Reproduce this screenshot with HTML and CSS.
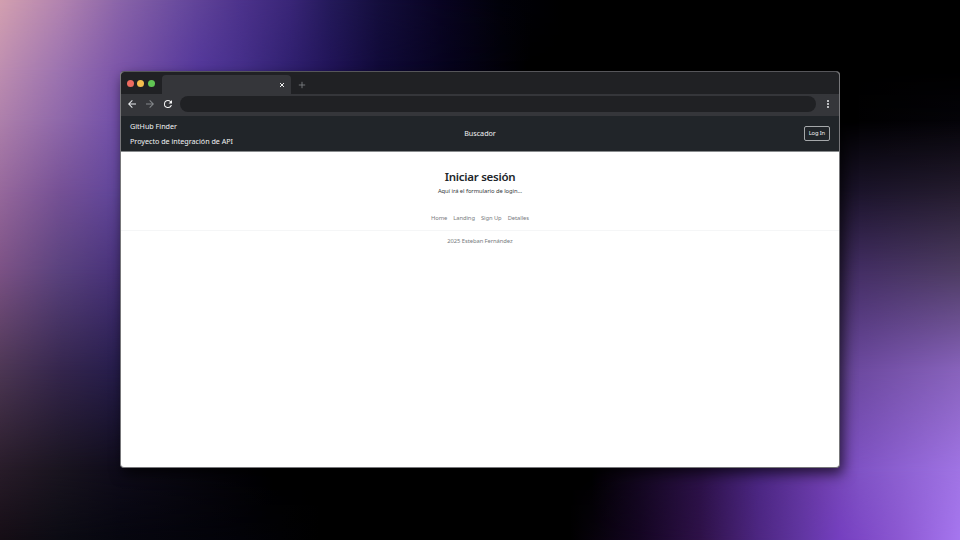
FILE: index.html
```html
<!DOCTYPE html>
<html lang="es">
<head>
<meta charset="utf-8">
<title>GitHub Finder</title>
<link rel="stylesheet" href="styles.css">
</head>
<body>
<div class="backdrop">
  <div class="band band-1"></div>
  <div class="band band-2"></div>
  <div class="band band-3"></div>
  <div class="band band-4"></div>
  <div class="band band-5"></div>
  <div class="band band-6"></div>
  <div class="band band-7"></div>
  <div class="band band-8"></div>
</div>
<div class="window">
  <div class="tabs">
    <div class="lights"><i class="red"></i><i class="yellow"></i><i class="green"></i></div>
    <div class="tab"><svg width="6" height="6" viewBox="0 0 6 6"><path d="M1 1l4 4M5 1l-4 4" stroke="#f0f0f0" stroke-width="1"/></svg></div>
    <svg class="plus" width="8" height="8" viewBox="0 0 8 8"><path d="M4 .8v6.4M.8 4h6.4" stroke="#7b7e81" stroke-width=".9"/></svg>
  </div>
  <div class="toolbar">
    <svg class="nav" viewBox="0 0 24 24" fill="#e8eaed"><path d="M20 11H7.83l5.59-5.59L12 4l-8 8 8 8 1.41-1.41L7.83 13H20v-2z"/></svg>
    <svg class="nav" viewBox="0 0 24 24" fill="#85888b"><path d="M12 4l-1.41 1.41L16.17 11H4v2h12.17l-5.58 5.59L12 20l8-8z"/></svg>
    <svg class="nav" viewBox="0 0 24 24" fill="#f4f4f4"><path d="M17.65 6.35A7.96 7.96 0 0 0 12 4a8 8 0 1 0 7.73 10h-2.08A6 6 0 1 1 12 6c1.66 0 3.14.69 4.22 1.78L13 11h7V4l-2.35 2.35z"/></svg>
    <div class="address"></div>
    <svg class="more" viewBox="0 0 24 24" fill="#e8eaed"><circle cx="12" cy="6" r="2"/><circle cx="12" cy="12" r="2"/><circle cx="12" cy="18" r="2"/></svg>
  </div>
  <header class="navbar">
    <div class="brand"><span>GitHub Finder</span><span>Proyecto de integración de API</span></div>
    <a class="search">Buscador</a>
    <a class="login">Log In</a>
  </header>
  <main>
    <h1>Iniciar sesión</h1>
    <p>Aquí irá el formulario de login...</p>
  </main>
  <footer>
    <nav><a>Home</a><a>Landing</a><a>Sign Up</a><a>Detalles</a></nav>
    <p>2025 Esteban Fernández</p>
  </footer>
</div>
</body>
</html>
```
FILE: styles.css
```css
* { box-sizing: border-box; }
body {
  margin: 0;
  width: 960px;
  height: 540px;
  overflow: hidden;
  position: relative;
  display: flex;
  justify-content: center;
  padding-top: 71px;
  background: #000;
  font-family: "Noto Sans", "Open Sans", sans-serif;
}
svg { display: block; flex: none; }
p, h1 { margin: 0; }

/* Each band fades in over the one above it, blending the rows into a mesh. */
.backdrop { position: absolute; inset: 0; }
.band {
  position: absolute;
  inset: 0;
  -webkit-mask: linear-gradient(transparent var(--from), #000 var(--to));
  mask: linear-gradient(transparent var(--from), #000 var(--to));
}
.band-1 { --from: -2px; --to: -1px; background: linear-gradient(90deg, #d3a0b0 0, #b384b0 60px, #8a64a9 120px, #694b9e 180px, #4d338c 240px, #3a2678 290px, #241a5a 330px, #140e3c 380px, #090422 440px, #02020a 500px, #000 570px); }
.band-2 { --from: 0px; --to: 70px; background: linear-gradient(90deg, #be8eb0 0, #9c73b0 60px, #7e57a9 115px, #53379a 200px, #452f8a 240px, #302070 290px, #211458 330px, #100a38 380px, #06031c 450px, #000 530px); }
.band-3 { --from: 70px; --to: 120px; background: linear-gradient(90deg, #ae80ab 0, #8f68aa 60px, #7250a8 115px, #3a2678 200px, #000 400px, #000 840px, #040308 960px); }
.band-4 { --from: 120px; --to: 190px; background: linear-gradient(90deg, #97699c 0, #765196 60px, #61469a 115px, #000 400px, #000 780px, #1a1329 860px, #231b2d 960px); }
.band-5 { --from: 190px; --to: 270px; background: linear-gradient(90deg, #7c5285 0, #5a427e 60px, #48327a 115px, #000 400px, #000 760px, #432e63 860px, #4d3c62 960px); }
.band-6 { --from: 270px; --to: 370px; background: linear-gradient(90deg, #4d3754 0, #35264d 60px, #261d4b 115px, #000 400px, #000 700px, #6d4aa0 860px, #8863bc 960px); }
.band-7 { --from: 370px; --to: 470px; background: linear-gradient(90deg, #281c29 0, #19141f 60px, #0e0b19 120px, #000 280px, #000 590px, #2b1147 700px, #4c2784 760px, #6d3dab 820px, #8053c5 860px, #a074e4 960px); }
.band-8 { --from: 470px; --to: 540px; background: linear-gradient(90deg, #150d15 0, #0b0b13 60px, #06060f 120px, #020208 240px, #000 320px, #000 570px, #140522 640px, #2e1148 700px, #4e2783 760px, #6035a0 800px, #753fc0 840px, #8c58d2 900px, #a676ef 960px); }

.window {
  position: relative;
  width: 720px;
  height: 397px;
  border: 1px solid #77777a;
  border-top-color: #56565a;
  border-radius: 4px;
  overflow: hidden;
  background: #fff;
  box-shadow: 3px 6px 13px rgba(0, 0, 0, .65);
}
.tabs { display: flex; height: 22px; background: #202124; padding-left: 5.5px; }
.lights { display: flex; gap: 3.8px; padding-top: 7.7px; width: 35.5px; }
.lights i { width: 7px; height: 7px; border-radius: 50%; }
.red { background: #ed6b60; }
.yellow { background: #f4be4f; }
.green { background: #61c554; }
.tab {
  width: 129px;
  height: 19px;
  margin-top: 3px;
  padding: 7px 6px 0 0;
  display: flex;
  justify-content: flex-end;
  border-radius: 4px 4px 0 0;
  background: #35363a;
}
.plus { margin: 8.6px 0 0 7px; }
.toolbar { display: flex; align-items: center; height: 22px; padding: 0 5px 2px 5px; background: #35363a; }
.nav { width: 12px; height: 12px; margin-right: 6px; }
.address { flex: 1; height: 16px; border-radius: 8px; background: #202124; }
.more { width: 12px; height: 12px; margin-left: 6px; }
.navbar {
  display: grid;
  grid-template-columns: 1fr auto 1fr;
  align-items: center;
  height: 36px;
  padding: 0 9px;
  border-bottom: 1px solid #888b8d;
  background: #212529;
  color: #f1f3f4;
  font-size: 7.2px;
  letter-spacing: -.02px;
}
.brand { display: flex; flex-direction: column; line-height: 15px; }
.search { position: relative; top: -.6px; }
.login { justify-self: end; padding: 0 4px; border: 1px solid #a5a8aa; border-radius: 2px; font-size: 5.8px; letter-spacing: -.15px; line-height: 13px; }
main { padding-top: 17px; text-align: center; color: #212529; }
h1 { font-size: 11.5px; line-height: 16px; font-weight: 600; letter-spacing: -.26px; }
main p { margin-top: 1px; font-size: 5.8px; letter-spacing: -.05px; line-height: 11px; color: #34383b; }
footer { margin-top: 16px; text-align: center; color: #777b7e; font-size: 5.8px; letter-spacing: -.06px; line-height: 11px; }
footer nav { display: flex; justify-content: center; gap: 6px; height: 18px; border-bottom: 1px solid #f5f6f7; }
footer p { padding-top: 4.5px; }
```
